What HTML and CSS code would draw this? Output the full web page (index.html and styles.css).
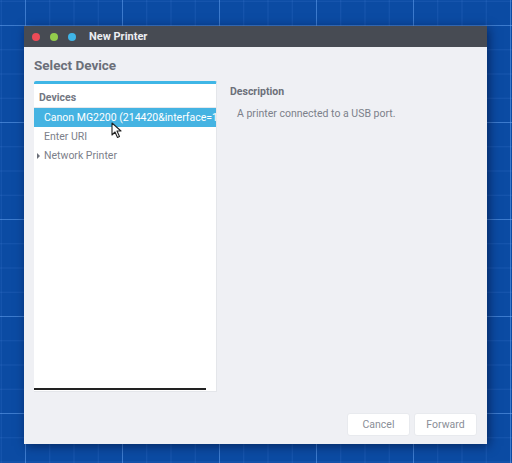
FILE: index.html
```html
<!DOCTYPE html>
<html>
<head>
<meta charset="utf-8">
<link rel="stylesheet" href="styles.css">
</head>
<body>
<div class="desktop">
  <div class="window">
    <div class="titlebar">
      <span class="dot red"></span>
      <span class="dot green"></span>
      <span class="dot blue"></span>
      <span class="title">New Printer</span>
    </div>
    <div class="content">
      <h1 class="heading">Select Device</h1>
      <div class="main">
        <div class="devices">
          <div class="devices-head">Devices</div>
          <div class="row selected">Canon MG2200 (214420&amp;interface=1)</div>
          <div class="row">Enter URI</div>
          <div class="row expander"><span class="tri"></span>Network Printer</div>
          <div class="spacer"></div>
          <div class="scrollbar"></div>
          <svg class="cursor" width="12" height="17" viewBox="0 0 12 17"><path d="M1 1 L1 13 L4 10 L6.5 15.5 L8.5 14.5 L6 9 L10 9 Z" fill="#fff" stroke="#222" stroke-width="1.1" stroke-linejoin="round"/></svg>
        </div>
        <div class="desc">
          <div class="desc-head">Description</div>
          <div class="desc-text">A printer connected to a USB port.</div>
        </div>
      </div>
      <div class="buttons">
        <button class="btn">Cancel</button>
        <button class="btn">Forward</button>
      </div>
    </div>
  </div>
</div>
</body>
</html>
```
FILE: styles.css
```css
* { box-sizing: border-box; }
html, body { margin: 0; padding: 0; }
body { font-family: Roboto, "Noto Sans", sans-serif; }
.desktop {
  width: 512px;
  height: 463px;
  overflow: hidden;
  padding: 26px 0 0 24px;
  background-color: #0b4ba3;
  background-image:
    linear-gradient(90deg, rgba(120,180,255,0.38) 1px, transparent 1px),
    linear-gradient(0deg, rgba(120,180,255,0.38) 1px, transparent 1px),
    linear-gradient(90deg, rgba(120,170,255,0.13) 1px, transparent 1px),
    linear-gradient(0deg, rgba(120,170,255,0.13) 1px, transparent 1px);
  background-size: 97px 97px, 97px 97px, 24.25px 24.25px, 24.25px 24.25px;
  background-position: 25px 26px, 25px 26px, 25px 26px, 25px 26px;
}
.window {
  width: 463px;
  height: 418px;
  display: flex;
  flex-direction: column;
  box-shadow: 2px 2px 10px rgba(0,10,40,0.55);
}
.titlebar {
  height: 21px;
  background: #474b53;
  display: flex;
  align-items: center;
  padding-left: 8px;
  gap: 10px;
}
.dot { width: 8px; height: 8px; border-radius: 50%; display: block; }
.red { background: #ee4b57; }
.green { background: #93cc4c; }
.blue { background: #3fb5e8; }
.title {
  color: #eceef2;
  font-weight: bold;
  font-size: 11px;
  margin-left: 3px;
}
.content {
  flex: 1;
  background: #eff0f4;
  padding: 10px 10px 8px 10px;
  display: flex;
  flex-direction: column;
}
.heading {
  margin: 0;
  font-size: 13.5px;
  font-weight: bold;
  color: #6b6f79;
  line-height: 16px;
  height: 24px;
}
.main { display: flex; height: 311px; }
.devices {
  position: relative;
  width: 183px;
  background: #fff;
  border-top: 3px solid #3fb6e6;
  border-right: 1px solid #e4e6ea;
  border-bottom: 1px solid #e4e6ea;
  display: flex;
  flex-direction: column;
  border-radius: 2px 2px 0 0;
}
.devices-head {
  font-size: 10.5px;
  font-weight: bold;
  color: #737782;
  padding: 7px 0 0 5px;
  height: 24px;
  border-bottom: 1px solid #e6e8ec;
  line-height: 13px;
}
.row {
  height: 19px;
  line-height: 19px;
  font-size: 10.5px;
  color: #7c808a;
  padding-left: 10px;
  white-space: nowrap;
  overflow: hidden;
}
.row.selected { background: #45b3e2; color: #fff; }
.expander { padding-left: 3px; display: flex; align-items: center; }
.tri {
  width: 0; height: 0;
  border-top: 3px solid transparent;
  border-bottom: 3px solid transparent;
  border-left: 3px solid #6b6f79;
  margin-right: 4px;
}
.spacer { flex: 1; }
.scrollbar {
  width: 172px;
  height: 2px;
  background: #222;
  margin-bottom: 1px;
}
.cursor { position: absolute; left: 77px; top: 38px; }
.desc { padding-left: 13px; padding-top: 4px; }
.desc-head {
  font-size: 10.5px;
  font-weight: bold;
  color: #6b6f79;
  line-height: 13px;
}
.desc-text {
  font-size: 10.5px;
  color: #7c808a;
  margin-top: 9px;
  padding-left: 7px;
  line-height: 13px;
}
.buttons {
  margin-top: auto;
  display: flex;
  justify-content: flex-end;
  gap: 4px;
}
.btn {
  width: 63px;
  height: 23px;
  border: 1px solid #e8eaee;
  background: #fff;
  border-radius: 3px;
  font-family: Roboto, "Noto Sans", sans-serif;
  font-size: 10.5px;
  color: #8a8e97;
  padding: 0;
}
```
